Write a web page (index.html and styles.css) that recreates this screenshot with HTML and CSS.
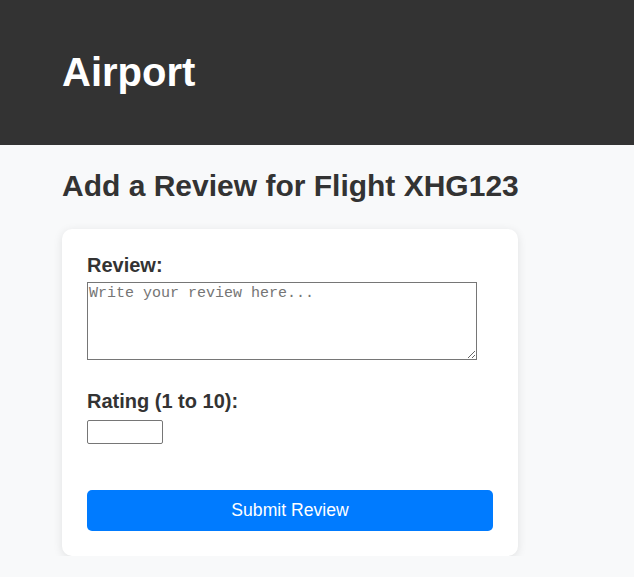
FILE: index.html
```html
<!DOCTYPE html>
<html lang="en">
<head>
<meta charset="utf-8">
<title>Airport</title>
<link rel="stylesheet" href="styles.css">
</head>
<body>
<header class="site-header">
  <h1 class="site-title">Airport</h1>
</header>
<main class="content">
  <h2 class="page-title">Add a Review for Flight XHG123</h2>
  <form class="review-card">
    <label class="field-label" for="review">Review:</label>
    <textarea id="review" class="review-text" placeholder="Write your review here..."></textarea>
    <label class="field-label rating-label" for="rating">Rating (1 to 10):</label>
    <input id="rating" class="rating-input" type="text">
    <button class="submit-btn" type="button">Submit Review</button>
  </form>
</main>
</body>
</html>
```
FILE: styles.css
```css
* { box-sizing: border-box; }
html, body { margin: 0; padding: 0; }
body {
  background: #f8f9fa;
  font-family: "Liberation Sans", Arial, sans-serif;
  color: #333;
}
.site-header {
  background: #333;
  height: 145px;
  padding: 0 62px;
  display: flex;
  align-items: center;
}
.site-title {
  margin: 0;
  color: #fff;
  font-size: 40px;
  font-weight: bold;
}
.content {
  padding: 0 62px;
}
.page-title {
  margin: 24px 0 26px;
  font-size: 30px;
  font-weight: bold;
  color: #333;
  line-height: 34px;
}
.review-card {
  width: 456px;
  background: #fff;
  border-radius: 10px;
  box-shadow: 0 2px 10px rgba(0,0,0,0.1);
  padding: 25px;
  display: flex;
  flex-direction: column;
  align-items: flex-start;
}
.field-label {
  font-size: 20px;
  font-weight: bold;
  line-height: 23px;
  color: #333;
  margin-bottom: 5px;
}
.review-text {
  width: 390px;
  height: 78px;
  border: 1px solid #767676;
  padding: 2px 1px;
  font-family: "Liberation Mono", monospace;
  font-size: 15px;
  resize: both;
}
.review-text::placeholder { color: #757575; }
.rating-label {
  margin-top: 30px;
  margin-bottom: 7px;
}
.rating-input {
  width: 76px;
  height: 24px;
  border: 1px solid #767676;
  border-radius: 2px;
  padding: 1px 2px;
}
.submit-btn {
  margin-top: 46px;
  width: 100%;
  height: 41px;
  background: #007bff;
  color: #fff;
  border: none;
  border-radius: 5px;
  font-family: "Liberation Sans", Arial, sans-serif;
  font-size: 17.6px;
}
```
